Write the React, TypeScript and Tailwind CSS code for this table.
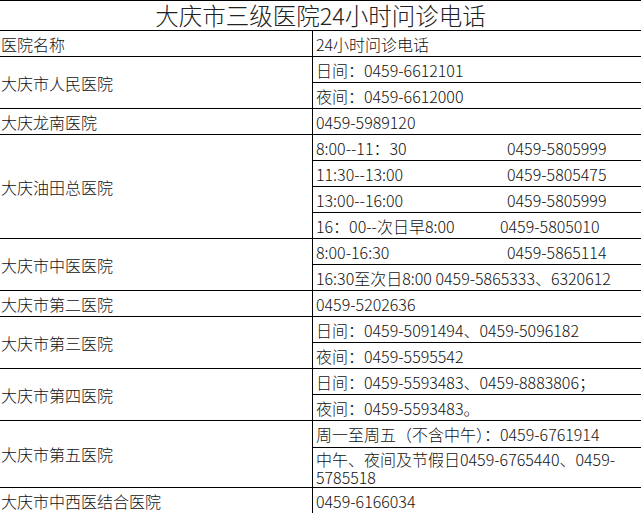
import React from 'react';

type SubRow = { content: React.ReactNode; h?: string };

interface Group {
  name: string;
  rows: SubRow[];
}

const Split: React.FC<{ time: string; phone: string; w?: string }> = ({ time, phone, w = 'w-[191px]' }) => (
  <span className="flex">
    <span className={`${w} shrink-0`}>{time}</span>
    <span>{phone}</span>
  </span>
);

const groups: Group[] = [
  {
    name: '大庆市人民医院',
    rows: [{ content: '日间：0459-6612101' }, { content: '夜间：0459-6612000' }],
  },
  { name: '大庆龙南医院', rows: [{ content: '0459-5989120' }] },
  {
    name: '大庆油田总医院',
    rows: [
      { content: <Split time="8:00--11：30" phone="0459-5805999" /> },
      { content: <Split time="11:30--13:00" phone="0459-5805475" /> },
      { content: <Split time="13:00--16:00" phone="0459-5805999" /> },
      { content: <Split time="16：00--次日早8:00" phone="0459-5805010" w="w-[184px]" /> },
    ],
  },
  {
    name: '大庆市中医医院',
    rows: [
      { content: <Split time="8:00-16:30" phone="0459-5865114" /> },
      { content: '16:30至次日8:00 0459-5865333、6320612' },
    ],
  },
  { name: '大庆市第二医院', rows: [{ content: '0459-5202636' }] },
  {
    name: '大庆市第三医院',
    rows: [{ content: '日间：0459-5091494、0459-5096182' }, { content: '夜间：0459-5595542' }],
  },
  {
    name: '大庆市第四医院',
    rows: [{ content: '日间：0459-5593483、0459-8883806；' }, { content: '夜间：0459-5593483。' }],
  },
  {
    name: '大庆市第五医院',
    rows: [
      { content: '周一至周五（不含中午）：0459-6761914', h: 'h-[26px] items-center' },
      { content: '中午、夜间及节假日0459-6765440、0459-5785518', h: 'h-[40px] leading-[18px] items-start pt-[2px]' },
    ],
  },
  { name: '大庆市中西医结合医院', rows: [{ content: '0459-6166034' }] },
];

export default function App() {
  return (
    <div
      className="w-[641px] bg-white text-[#111] text-[16px] font-light"
      style={{ fontFamily: '"Noto Sans CJK SC", sans-serif' }}
    >
      <div className="h-[30px] border-t border-black flex items-center justify-center text-[23.5px] leading-[29px] text-[#222]">
        大庆市三级医院24小时问诊电话
      </div>
      <div className="flex h-[26px] border-t border-black">
        <div className="w-[313px] shrink-0 border-r border-black pl-[1px] flex items-center">医院名称</div>
        <div className="flex-1 pl-[3px] flex items-center">24小时问诊电话</div>
      </div>
      {groups.map((g, gi) => (
        <div key={g.name} className={`flex border-t border-black ${gi === groups.length - 1 ? 'border-b' : ''}`}>
          <div className="w-[313px] shrink-0 border-r border-black pl-[1px] flex items-center">{g.name}</div>
          <div className="flex-1 flex flex-col">
            {g.rows.map((r, ri) => (
              <div
                key={ri}
                className={`flex pl-[3px] pr-[20px] ${ri > 0 ? 'border-t border-black' : ''} ${
                  r.h ?? (ri > 0 ? 'h-[26px] items-center' : 'h-[25px] items-center')
                }`}
              >
                {r.content}
              </div>
            ))}
          </div>
        </div>
      ))}
    </div>
  );
}
